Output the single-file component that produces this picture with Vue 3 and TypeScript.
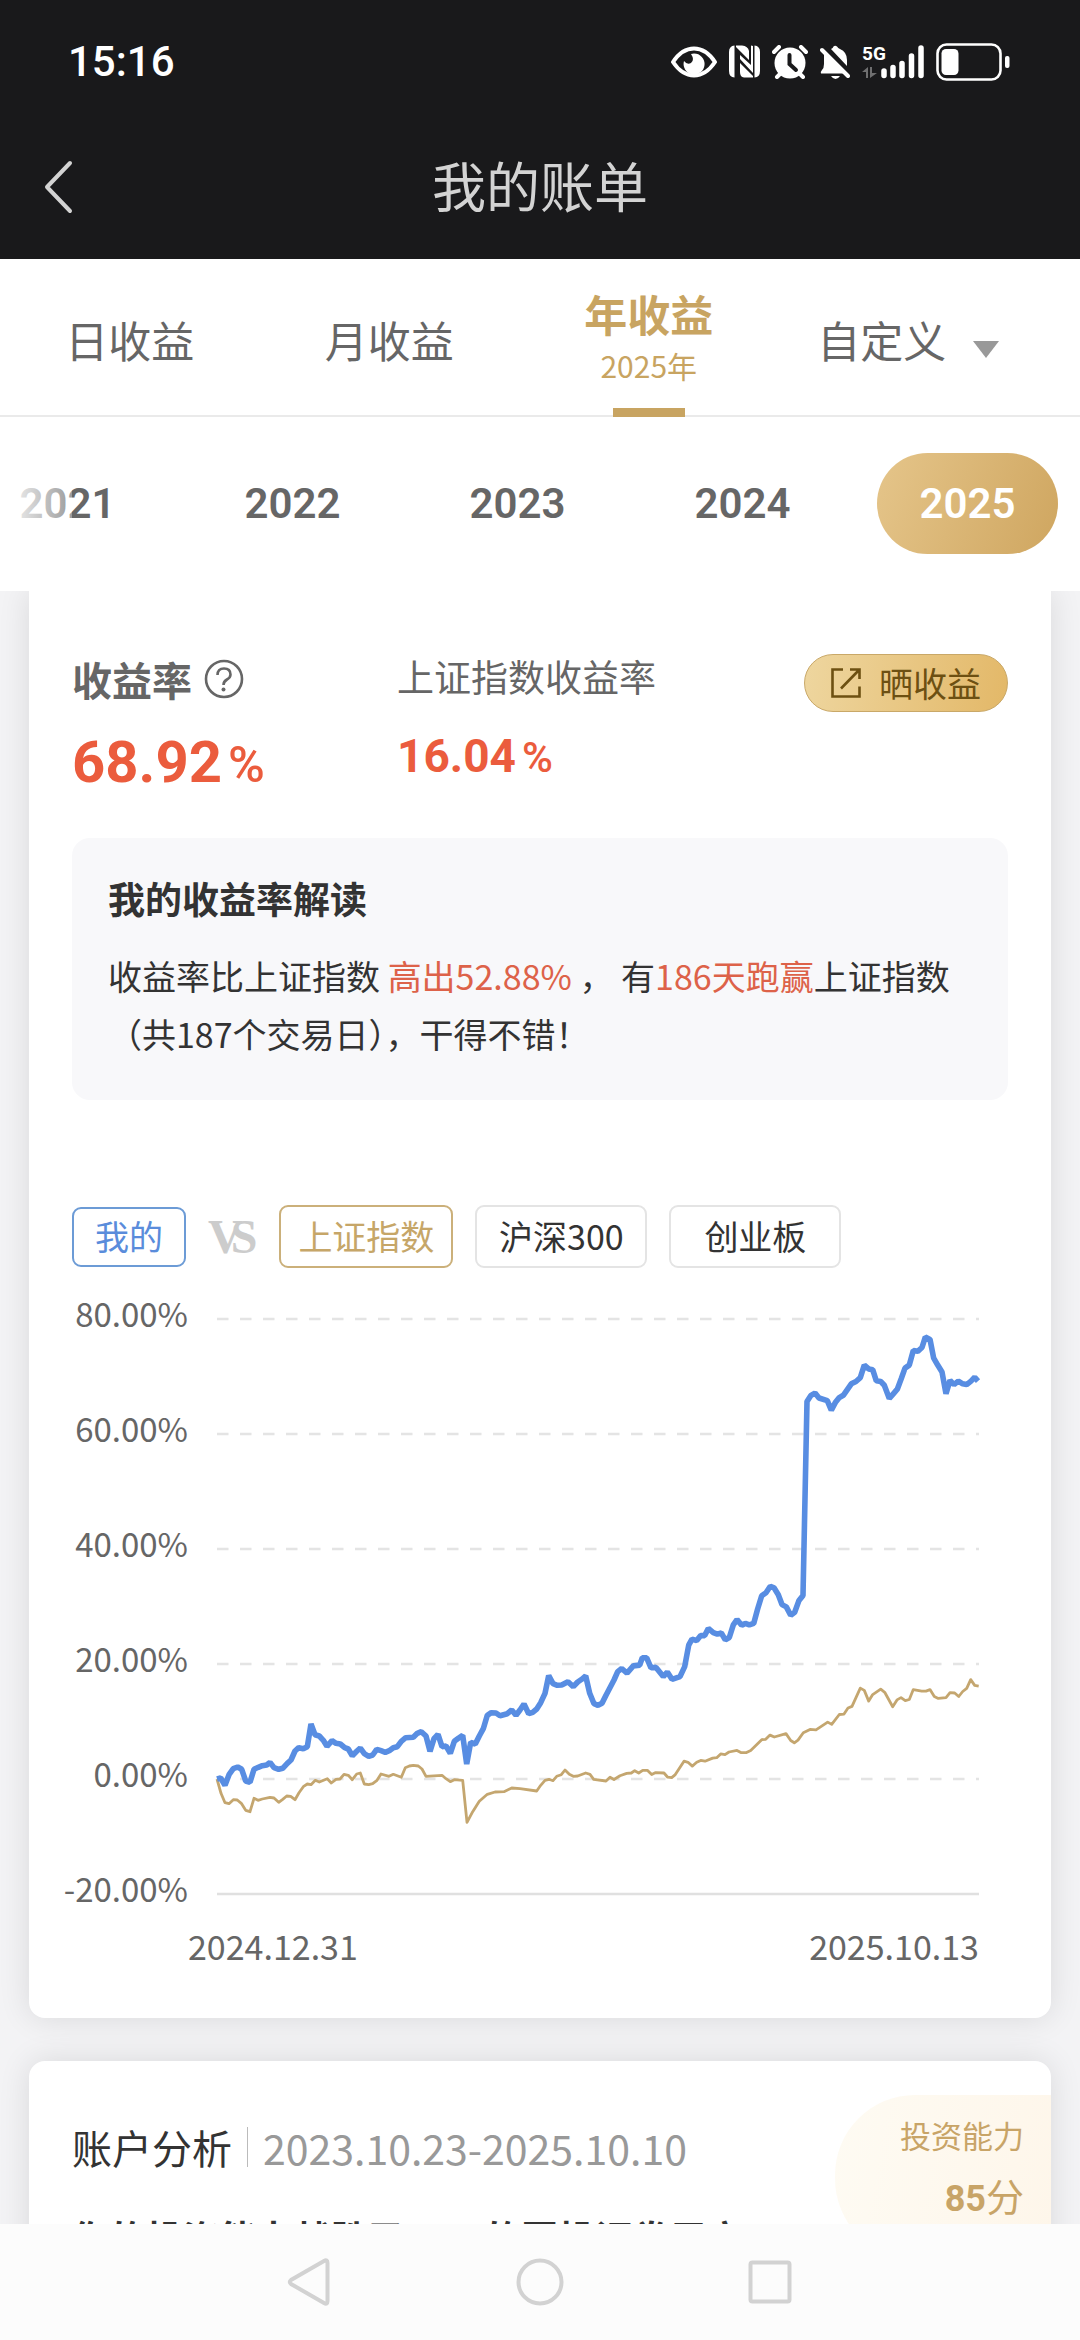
<script setup lang="ts">
import { ref } from 'vue'

type Point = [number, number]
interface Segment {
  origin: Point
  scale: Point
  points: Point[]
}

const periods = ['日收益', '月收益', '年收益', '自定义']
const activePeriod = ref('年收益')
const years = [2021, 2022, 2023, 2024, 2025]
const activeYear = ref(2025)
const indexes = ['上证指数', '沪深300', '创业板']
const activeIndex = ref('上证指数')

const axisLabels = ['80.00%', '60.00%', '40.00%', '20.00%', '0.00%', '-20.00%']
const gridLines = [0, 115, 230, 345, 460]

const firstHalf = { origin: [-17, 281] as Point, scale: [3, 3] as Point }
const secondHalf = { origin: [383, -19] as Point, scale: [3, 2.613] as Point }

const mine: Segment[] = [
  {
    ...firstHalf,
    points: [[51,537],[62,534],[75,556],[87,524],[100,506],[113,501],[125,508],[137,543],[150,547],[162,508],[175,502],[187,497],[200,495],[210,487],[222,503],[236,508],[248,505],[262,490],[273,480],[285,453],[296,443],[310,446],[322,440],[333,372],[345,404],[358,408],[370,421],[381,439],[396,422],[408,430],[421,432],[434,443],[445,447],[457,467],[470,454],[481,444],[493,461],[506,469],[518,465],[530,448],[543,452],[556,457],[568,452],[580,443],[592,440],[604,424],[617,413],[640,412],[652,400],[664,395],[678,408],[690,454],[702,416],[714,403],[726,440],[738,438],[751,460],[763,424],[776,414],[788,406],[800,492],[812,427],[826,432],[838,408],[850,386],[862,346],[874,338],[888,339],[900,347],[922,341],[935,330],[948,346],[960,330],[972,312],[986,341],[998,337],[1010,327],[1022,308],[1035,280],[1046,227],[1059,251],[1072,256],[1085,255],[1104,245],[1120,260],[1133,246],[1145,238],[1157,228],[1169,280],[1182,311],[1194,316],[1206,310],[1218,286],[1242,240]],
  },
  {
    ...secondHalf,
    points: [[53,971],[65,963],[81,975],[100,956],[119,954],[127,935],[140,935],[153,961],[168,960],[190,984],[202,972],[216,991],[240,984],[254,958],[266,902],[276,886],[290,890],[302,877],[314,877],[325,858],[340,869],[352,873],[364,870],[376,888],[388,882],[400,849],[411,835],[425,850],[436,845],[448,849],[461,845],[473,807],[485,773],[498,765],[511,748],[522,752],[535,770],[546,796],[559,802],[572,824],[584,816],[597,785],[609,772],[621,265],[632,250],[645,243],[657,256],[682,263],[694,288],[706,268],[718,255],[730,249],[754,219],[768,213],[781,203],[793,170],[806,180],[818,182],[829,211],[842,213],[853,223],[868,257],[880,245],[892,233],[904,205],[915,178],[928,170],[940,132],[953,134],[966,124],[976,97],[990,103],[1001,152],[1013,170],[1026,188],[1038,245],[1050,210],[1062,221],[1075,212],[1088,219],[1100,221],[1113,212],[1124,202],[1134,212]],
  },
]

const benchmark: Segment[] = [
  {
    ...firstHalf,
    points: [[51,537],[63,580],[75,608],[87,611],[100,599],[112,600],[124,610],[137,631],[150,635],[162,595],[174,601],[187,597],[210,592],[222,594],[236,607],[248,598],[260,588],[272,589],[285,599],[297,578],[310,560],[322,552],[333,554],[346,541],[358,546],[382,536],[394,549],[408,538],[420,537],[432,523],[445,526],[457,539],[470,522],[481,519],[493,552],[506,554],[518,551],[531,541],[543,522],[567,529],[580,523],[604,532],[616,503],[628,498],[640,496],[655,498],[666,507],[678,529],[726,526],[738,536],[751,545],[763,539],[788,541],[801,667],[818,635],[838,604],[862,583],[885,576],[912,575],[935,564],[960,566],[1010,573],[1022,556],[1035,541],[1047,538],[1059,542],[1070,529],[1084,524],[1095,510],[1108,523],[1120,529],[1133,528],[1157,519],[1170,523],[1181,538],[1218,543]],
  },
  {
    ...secondHalf,
    points: [[30,1247],[42,1253],[60,1243],[80,1237],[94,1236],[104,1230],[116,1236],[128,1229],[142,1229],[155,1240],[167,1235],[192,1236],[203,1247],[215,1248],[226,1240],[252,1205],[264,1208],[277,1218],[290,1208],[302,1203],[315,1205],[338,1197],[350,1196],[362,1186],[375,1188],[387,1181],[411,1177],[424,1183],[438,1183],[452,1177],[485,1149],[497,1148],[510,1137],[523,1142],[558,1133],[572,1151],[583,1157],[594,1150],[610,1131],[630,1122],[648,1123],[683,1103],[695,1109],[718,1083],[732,1082],[744,1066],[756,1062],[781,1014],[793,1020],[806,1048],[818,1031],[842,1017],[854,1025],[878,1063],[891,1045],[903,1039],[916,1047],[928,1044],[940,1018],[965,1022],[978,1022],[990,1018],[1003,1036],[1015,1041],[1038,1039],[1050,1026],[1064,1027],[1076,1036],[1088,1023],[1100,1015],[1112,992],[1124,1007],[1136,1009]],
  },
]

function trace(segments: Segment[]): string {
  return segments
    .flatMap((s) =>
      s.points.map(([x, y]) => `${(s.origin[0] + x / s.scale[0]).toFixed(1)},${(s.origin[1] + y / s.scale[1]).toFixed(1)}`),
    )
    .join(' ')
}
</script>

<template>
  <div class="app">
    <header class="top">
      <div class="status">
        <span class="time">15:16</span>
        <div class="status-icons">
          <svg width="46" height="32" viewBox="0 0 46 32" aria-hidden="true">
            <path d="M2 16C8 7 15 2.500 23 2.500S38 7 44 16C38 25 31 29.500 23 29.500S8 25 2 16Z" fill="none" stroke="#fff" stroke-width="4" stroke-linejoin="round" />
            <path d="M23 7.500A10.500 10.500 0 1 1 13 15Q16 19 20 17Q24 14 20 8Z" fill="#fff" />
          </svg>
          <svg width="31" height="33" viewBox="0 0 31 33" aria-hidden="true">
            <path d="M5.500 0.500V32.500Q0 32 0 26V7Q0 1 5.500 0.500Z M7 0.500H13Q19 1 20 6V15L7 2Z M25.500 32.500V0.500Q31 1 31 7V26Q31 32 25.500 32.500Z M24 32.500H15Q11 32 11 27V18L24 31Z M22 0.500L24 1V28L11 14V10L22 20Z" fill="#fff" />
          </svg>
          <svg width="36" height="34" viewBox="0 0 36 34" aria-hidden="true">
            <circle cx="18" cy="18" r="15.500" fill="#fff" />
            <path d="M2 7L7 2M34 7L29 2M5 32L9 28M31 32L27 28" stroke="#fff" stroke-width="4" stroke-linecap="round" />
            <path d="M17.500 10V19L24 25" fill="none" stroke="#19191b" stroke-width="4" stroke-linecap="round" />
          </svg>
          <svg width="30" height="34" viewBox="0 0 30 34" aria-hidden="true">
            <path d="M11 4Q13 3 13.500 1.500Q15 0 17 1.500Q18 3 20 4Q27 7 27 15V21Z M4 9L24 28.500H1Q0 27 2 25Q4 23 4 19Z" fill="#fff" />
            <path d="M2 5L28 31" stroke="#fff" stroke-width="4" stroke-linecap="round" />
            <path d="M11 31H20Q18 34 15.500 34T11 31Z" fill="#fff" />
          </svg>
          <div class="cell">
            <span class="net">5G</span>
            <svg width="62" height="34" viewBox="0 0 62 34" aria-hidden="true">
              <path d="M0 27L6 22V33H4V27Z M8 22H10V28H15L8 33Z" fill="#6f6f70" />
              <path d="M22 26V30.500M31 22.500V30.500M40 18.500V30.500M49.500 11V30.500M59 3V30.500" stroke="#fff" stroke-width="5.500" stroke-linecap="round" />
            </svg>
          </div>
          <svg width="74" height="38" viewBox="0 0 74 38" aria-hidden="true">
            <rect x="1.500" y="1.500" width="63" height="35" rx="9" fill="none" stroke="#fff" stroke-width="2.600" />
            <rect x="5.500" y="6" width="17" height="26" rx="4.500" fill="#fff" />
            <rect x="69" y="13" width="4.500" height="12" rx="2" fill="#fff" />
          </svg>
        </div>
      </div>
      <div class="title-bar">
        <button class="back" type="button" aria-label="返回">
          <svg width="30" height="54" viewBox="0 0 30 54"><path d="M26 3L3 27L26 51" fill="none" stroke="#d3d3d3" stroke-width="4" stroke-linecap="round" stroke-linejoin="round" /></svg>
        </button>
        <h1>我的账单</h1>
      </div>
    </header>

    <nav class="periods">
      <button
        v-for="p in periods"
        :key="p"
        type="button"
        :class="{ active: p === activePeriod }"
        @click="activePeriod = p"
      >
        <span>{{ p }}</span>
        <small v-if="p === activePeriod">{{ activeYear }}年</small>
        <i v-if="p === '自定义'" class="caret"></i>
      </button>
    </nav>

    <div class="years">
      <button
        v-for="y in years"
        :key="y"
        type="button"
        :class="{ active: y === activeYear }"
        @click="activeYear = y"
      >{{ y }}</button>
    </div>

    <main>
      <section class="card first">
        <div class="summary">
          <div class="stat own">
            <h2>收益率
              <svg width="40" height="40" viewBox="0 0 40 40" aria-hidden="true">
                <circle cx="20" cy="20" r="18" fill="none" stroke="#666" stroke-width="2.600" />
                <path d="M13.500 16Q13.500 9.500 20 9.500T26.500 15.500Q26.500 18.500 23 20.500T19.500 26" fill="none" stroke="#666" stroke-width="2.600" />
                <circle cx="19.500" cy="30.500" r="2" fill="#666" />
              </svg>
            </h2>
            <p>68.92<span>%</span></p>
          </div>
          <div class="stat index">
            <h2>上证指数收益率</h2>
            <p>16.04<span>%</span></p>
          </div>
          <button class="share" type="button">
            <svg width="30" height="30" viewBox="0 0 30 30" aria-hidden="true">
              <path d="M12 1.500H1.500V28.500H28.500V18.500M19 1.500H28.500V11M28.500 1.500L10 20.500" fill="none" stroke="#6d5012" stroke-width="2.600" />
            </svg>
            晒收益
          </button>
        </div>

        <div class="insight">
          <h3>我的收益率解读</h3>
          <p>收益率比上证指数 <em>高出52.88%</em> ， 有<em>186天跑赢</em>上证指数（共187个交易日），干得不错！</p>
        </div>

        <div class="chips">
          <button class="chip self" type="button">我的</button>
          <span class="versus">V<span>S</span></span>
          <button
            v-for="name in indexes"
            :key="name"
            class="chip"
            type="button"
            :class="{ active: name === activeIndex }"
            @click="activeIndex = name"
          >{{ name }}</button>
        </div>

        <div class="chart">
          <div class="axis">
            <span v-for="label in axisLabels" :key="label">{{ label }}</span>
          </div>
          <svg class="plot" viewBox="0 0 762 576" preserveAspectRatio="none" role="img" aria-label="收益率走势">
            <line v-for="y in gridLines" :key="y" x1="0" x2="762" :y1="y" :y2="y" stroke="#e4e4e4" stroke-width="2.500" stroke-dasharray="11.500 11.500" />
            <line x1="0" x2="762" y1="575" y2="575" stroke="#e0e0e0" stroke-width="2.500" />
            <polyline :points="trace(benchmark)" fill="none" stroke="#c4a66f" stroke-width="2.800" stroke-linejoin="round" />
            <polyline :points="trace(mine)" fill="none" stroke="#588de2" stroke-width="5.600" stroke-linejoin="bevel" />
          </svg>
        </div>
        <div class="dates"><span>2024.12.31</span><span>2025.10.13</span></div>
      </section>

      <section class="card second">
        <div class="analysis">
          <h2>账户分析</h2>
          <span>2023.10.23-2025.10.10</span>
        </div>
        <p class="headline">你的投资能力战胜了85%的国投证券用户</p>
        <div class="score">
          <span>投资能力</span>
          <p><b>85</b>分</p>
        </div>
      </section>
    </main>

    <nav class="system">
      <button type="button" aria-label="后退">
        <svg width="50" height="50" viewBox="0 0 50 50"><path d="M42.500 6Q42.500 2 39 4L6 23Q3.500 25 6 27L39 46Q42.500 48 42.500 44Z" fill="none" stroke="#d2d2d2" stroke-width="4" /></svg>
      </button>
      <button type="button" aria-label="主页">
        <svg width="50" height="50" viewBox="0 0 50 50"><circle cx="25" cy="25" r="21.500" fill="none" stroke="#d2d2d2" stroke-width="4" /></svg>
      </button>
      <button type="button" aria-label="最近任务">
        <svg width="50" height="50" viewBox="0 0 50 50"><rect x="5.500" y="5.500" width="39" height="39" rx="2" fill="none" stroke="#d2d2d2" stroke-width="4" /></svg>
      </button>
    </nav>
  </div>
</template>

<style>
body {
  margin: 0;
}
</style>

<style scoped>
.app {
  display: flex;
  flex-direction: column;
  height: 100vh;
  overflow: hidden;
  background: #f3f3f5;
  color: #333;
  font-family: "Noto Sans CJK SC", sans-serif;
}
button {
  margin: 0;
  padding: 0;
  border: 0;
  background: none;
  color: inherit;
  font: inherit;
  cursor: pointer;
}
h1, h2, h3, p {
  margin: 0;
  font-size: inherit;
  font-weight: 400;
}
svg {
  display: block;
  flex: none;
}

.top {
  flex: none;
  background: #19191b;
}
.status {
  display: flex;
  align-items: center;
  justify-content: space-between;
  height: 115px;
  padding: 8px 70px 0 68px;
  box-sizing: border-box;
}
.time {
  color: #fff;
  font: 500 42px/50px Roboto, sans-serif;
}
.status-icons {
  display: flex;
  align-items: center;
  gap: 12px;
}
.cell {
  position: relative;
}
.net {
  position: absolute;
  top: 0;
  left: 0;
  color: #fff;
  font: 700 19px/18px Roboto, sans-serif;
}
.title-bar {
  position: relative;
  display: flex;
  align-items: center;
  justify-content: center;
  height: 144px;
}
.back {
  position: absolute;
  left: 44px;
}
h1 {
  padding-bottom: 4px;
  color: #d3d3d3;
  font-size: 54px;
  line-height: 80px;
}

.periods {
  flex: none;
  display: flex;
  height: 158px;
  padding-right: 42px;
  box-sizing: border-box;
  border-bottom: 2px solid #eaeaea;
  background: #fff;
  color: #666;
}
.periods button {
  position: relative;
  flex: 1;
  display: flex;
  align-items: center;
  justify-content: center;
  padding-top: 4px;
  font-size: 43px;
  line-height: 60px;
}
.periods .active {
  flex-direction: column;
  padding: 0 0 4px;
  color: #c8a461;
  font-weight: 700;
}
.periods small {
  font-size: 30px;
  font-weight: 400;
  line-height: 44px;
}
.periods .active::after {
  content: "";
  position: absolute;
  bottom: -2px;
  width: 72px;
  height: 9px;
  background: #c8a461;
}
.caret {
  margin: 20px 0 0 27px;
  border: 13px solid transparent;
  border-top: 17px solid #999;
  border-bottom: 0;
}

.years {
  position: relative;
  flex: none;
  display: flex;
  justify-content: flex-end;
  gap: 44px;
  height: 174px;
  padding: 36px 22px 37px 0;
  box-sizing: border-box;
  overflow: hidden;
  background: #fff;
}
.years button {
  flex: none;
  width: 181px;
  border-radius: 51px;
  color: #666;
  font: 600 42px/60px Roboto, sans-serif;
}
.years .active {
  background: linear-gradient(110deg, #e5c58a, #cfa660);
  color: #fff;
}
.years::before {
  content: "";
  position: absolute;
  inset: 0 auto 0 0;
  width: 72px;
  background: linear-gradient(90deg, #fff, rgba(255, 255, 255, 0.35));
}

main {
  flex: 1;
  min-height: 0;
  padding: 0 29px;
  overflow: hidden;
}
.card {
  position: relative;
  border-radius: 16px;
  background: #fff;
  box-shadow: 0 0 32px rgba(0, 0, 0, 0.11);
}
.first {
  padding: 58px 43px 50px;
  border-radius: 0 0 16px 16px;
}
.summary {
  display: flex;
  align-items: flex-start;
}
.stat h2 {
  display: flex;
  align-items: center;
  color: #666;
}
.stat p {
  height: 72px;
  margin-top: 17px;
  color: #eb5c3d;
  font-family: Roboto, sans-serif;
  font-weight: 700;
  line-height: 72px;
}
.own {
  width: 325px;
}
.own h2 {
  gap: 12px;
  font-size: 40px;
  font-weight: 700;
  line-height: 60px;
}
.own p {
  font-size: 58px;
}
.stat span {
  margin-left: 6px;
  font-size: 50px;
  font-weight: 500;
  line-height: 50px;
}
.index h2 {
  font-size: 37px;
  line-height: 54px;
}
.index p {
  font-size: 46px;
}
.index span {
  font-size: 42px;
}
.share {
  display: flex;
  align-items: center;
  justify-content: center;
  gap: 18px;
  width: 204px;
  height: 58px;
  margin: 5px 0 0 auto;
  border: 1px solid #c9a868;
  border-radius: 29px;
  background: linear-gradient(100deg, #eed69f, #e3b868);
  color: #6d5012;
  font-size: 34px;
  line-height: 50px;
}
.insight {
  margin-top: 40px;
  padding: 35px 36px 37px;
  border-radius: 18px;
  background: #f8f8fa;
}
.insight h3 {
  font-size: 37px;
  font-weight: 700;
  line-height: 50px;
}
.insight p {
  margin-top: 24px;
  font-size: 34px;
  line-height: 58px;
}
.insight em {
  color: #dd6249;
  font-style: normal;
}

.chips {
  display: flex;
  align-items: center;
  gap: 22px;
  margin-top: 105px;
}
.chip {
  min-width: 172px;
  height: 63px;
  padding: 0 17px 2px;
  border: 2px solid #e4e4e4;
  border-radius: 9px;
  font-size: 34px;
  line-height: 50px;
}
.chip.active {
  border-color: #cbb07a;
  color: #c6a668;
}
.chip.self {
  min-width: 114px;
  height: 60px;
  border-color: #6c9bd6;
  color: #5a8cdb;
}
.versus {
  color: #ccc;
  font: 700 48px/50px "Liberation Serif", serif;
}
.versus span {
  margin-left: -12px;
}
.chart {
  display: flex;
  margin: 25px 29px 0 0;
}
.axis {
  display: flex;
  flex-direction: column;
  align-items: flex-end;
  justify-content: space-between;
  width: 116px;
  height: 615px;
  color: #666;
  font-size: 33px;
  line-height: 40px;
}
.plot {
  flex: 1;
  min-width: 0;
  height: 576px;
  margin: 26px 0 0 29px;
  overflow: visible;
}
.dates {
  display: flex;
  justify-content: space-between;
  margin-top: 18px;
  padding: 0 29px 2px 116px;
  color: #666;
  font-size: 34px;
  line-height: 40px;
}

.second {
  margin-top: 43px;
  padding: 56px 43px;
  overflow: hidden;
}
.analysis {
  display: flex;
  align-items: center;
  font-size: 40px;
  line-height: 60px;
}
.analysis span {
  margin-left: 15px;
  padding-left: 15px;
  border-left: 1px solid #bbb;
  color: #999;
  font-size: 41px;
  line-height: 40px;
}
.headline {
  margin-top: 33px;
  font-size: 37px;
  font-weight: 700;
  line-height: 54px;
}
.score {
  position: absolute;
  top: 34px;
  right: 0;
  width: 216px;
  height: 164px;
  padding: 15px 27px 0 0;
  box-sizing: border-box;
  border-radius: 80px 0 0 80px;
  background: linear-gradient(100deg, #fefbf3, #fef6ea);
  color: #c8a467;
  font-size: 31px;
  line-height: 50px;
  text-align: right;
}
.score p {
  margin-top: 8px;
  font-size: 38px;
  line-height: 54px;
}
.score b {
  font: 700 36px/54px Roboto, sans-serif;
}

.system {
  flex: none;
  display: flex;
  align-items: center;
  justify-content: center;
  gap: 180px;
  height: 116px;
  background: #fcfcfc;
}
</style>
